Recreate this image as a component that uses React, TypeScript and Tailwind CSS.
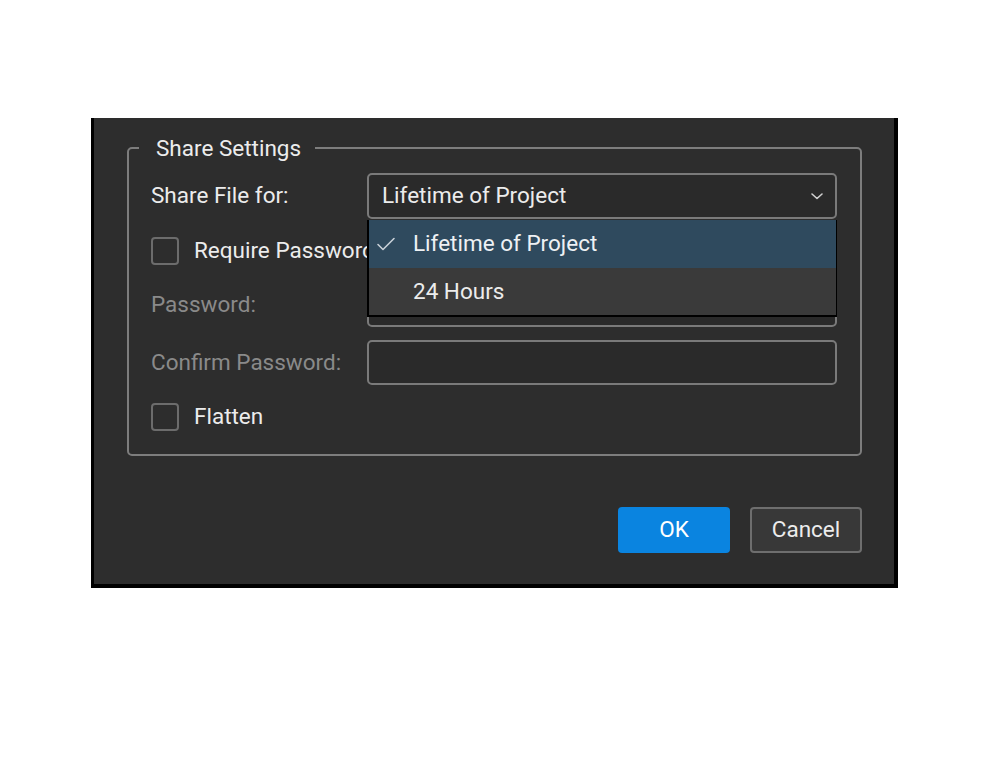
import React from "react";

const font = { fontFamily: "Roboto, 'Liberation Sans', sans-serif" };

function Checkbox({ label }: { label: string }) {
  return (
    <div className="flex items-center h-[28px]">
      <div className="w-[28px] h-[28px] rounded-[4px] border-2 border-[#6c6c6c]" />
      <span className="ml-[15px] text-[22.5px] text-[#ececec]">{label}</span>
    </div>
  );
}

export default function App() {
  return (
    <div className="w-[1000px] h-[772px] bg-white pt-[118px] pl-[91px]" style={font}>
      <div className="w-[807px] h-[470px] bg-[#2d2d2d] border-l-[3px] border-r-[4px] border-b-[4px] border-black pl-[33px] pr-[32px] pt-[17px]">
        <fieldset className="border-2 border-[#7d7d7d] rounded-[5px] pl-[22px] pr-[23px] pt-[12px] pb-[23px]">
          <legend className="-ml-[12px] pl-[17px] pr-[14px] text-[22.5px] leading-[26px] text-[#ececec]">
            Share Settings
          </legend>

          {/* share file for */}
          <div className="flex items-center h-[46px]">
            <span className="w-[216px] text-[22.5px] text-[#ececec]">Share File for:</span>
            <div className="relative flex-1 h-[46px]">
              <div className="h-full flex items-center justify-between rounded-[5px] border-2 border-[#7a7a7a] bg-[#2a2a2a] pl-[13px] pr-[10px]">
                <span className="text-[22.5px] text-[#ececec]">Lifetime of Project</span>
                <svg width="16" height="16" viewBox="0 0 16 16" fill="none" stroke="#d0d0d0" strokeWidth="1.6" strokeLinecap="round" strokeLinejoin="round">
                  <path d="M3 6l5 4.5L13 6" />
                </svg>
              </div>
              {/* open list */}
              <div className="absolute left-0 right-0 top-[47px] z-10 border-l-2 border-b-2 border-r border-black">
                <div className="flex items-center h-[48px] bg-[#2f4a5e]">
                  <svg className="ml-[7px]" width="20" height="20" viewBox="0 0 20 20" fill="none" stroke="#c8d0d8" strokeWidth="1.6" strokeLinecap="round" strokeLinejoin="round">
                    <path d="M2 10.5l5 5L18 4.5" />
                  </svg>
                  <span className="ml-[17px] text-[22.5px] text-[#eef1f4]">Lifetime of Project</span>
                </div>
                <div className="flex items-center h-[47px] bg-[#3a3a3a]">
                  <span className="ml-[44px] text-[22.5px] text-[#ececec]">24 Hours</span>
                </div>
              </div>
            </div>
          </div>

          <div className="mt-[18px]">
            <Checkbox label="Require Password" />
          </div>

          {/* password */}
          <div className="flex items-center h-[45px] mt-[17px]">
            <span className="w-[216px] text-[22.5px] text-[#8a8a8a]">Password:</span>
            <div className="flex-1 h-full rounded-[5px] border-2 border-[#7a7a7a] bg-[#2a2a2a]" />
          </div>

          <div className="flex items-center h-[45px] mt-[13px]">
            <span className="w-[216px] text-[22.5px] text-[#8a8a8a]">Confirm Password:</span>
            <div className="flex-1 h-full rounded-[5px] border-2 border-[#7a7a7a] bg-[#2a2a2a]" />
          </div>

          <div className="mt-[18px]">
            <Checkbox label="Flatten" />
          </div>
        </fieldset>

        <div className="flex justify-end gap-[20px] mt-[51px]">
          <button className="w-[112px] h-[46px] rounded-[4px] bg-[#0a84e0] text-[22.5px] text-white">OK</button>
          <button className="w-[112px] h-[46px] rounded-[4px] bg-[#383838] border-2 border-[#6e6e6e] text-[22.5px] text-[#ececec]">
            Cancel
          </button>
        </div>
      </div>
    </div>
  );
}
